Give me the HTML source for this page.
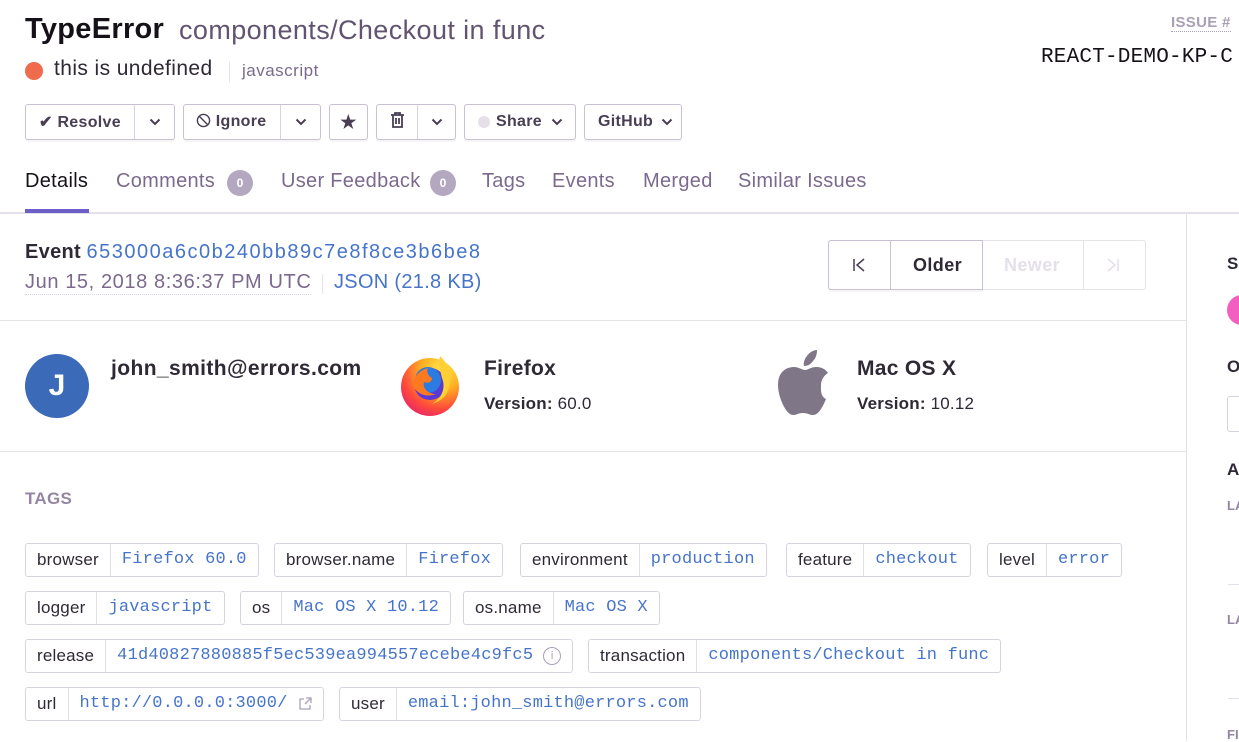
<!DOCTYPE html>
<html><head><meta charset="utf-8"><style>
*{box-sizing:border-box;margin:0;padding:0}
body{width:1239px;height:741px;overflow:hidden;background:#fff;font-family:"Liberation Sans",sans-serif;color:#2f2936;position:relative}
.a{position:absolute;white-space:nowrap}
.btn{position:absolute;top:104px;height:36px;border:1px solid #c9c0d1;border-radius:3px;box-shadow:0 2px 0 rgba(0,0,0,.04);display:flex;align-items:center;font-weight:bold;font-size:16px;color:#493e54;letter-spacing:0.3px}
.btn .s{border-left:1px solid #d8d2de;height:100%;display:flex;align-items:center;justify-content:center}
.tab{position:absolute;top:170px;font-size:20px;color:#7c6a8e;letter-spacing:0.3px}
.badge{position:absolute;top:170px;width:26px;height:26px;border-radius:13px;background:#b3a8c0;color:#fff;font-size:12px;font-weight:bold;text-align:center;line-height:26px}
.tag{position:absolute;height:34px;border:1px solid #d8d2de;border-radius:3px;display:flex;font-size:17px}
.tag .k{padding:0 11px;line-height:32px;color:#2f2936;border-right:1px solid #e4dfe9;letter-spacing:0.2px}
.tag .v{padding:0 11px;line-height:32px;color:#4674ca;font-family:"Liberation Mono",monospace;font-size:17px;letter-spacing:0.2px;display:flex;align-items:center}
.hr{position:absolute;left:0;width:1186px;height:1px;background:#e7e3eb}
</style></head><body>
<div class="a" style="left:25px;top:13px;font-size:29px;font-weight:bold;color:#161119;letter-spacing:0.3px">TypeError</div>
<div class="a" style="left:179px;top:15px;font-size:27px;color:#625471;letter-spacing:0.4px">components/Checkout in func</div>
<div class="a" style="left:25px;top:62px;width:18px;height:18px;border-radius:9px;background:#f06a4e"></div>
<div class="a" style="left:54px;top:57px;font-size:21px;color:#2f2936;letter-spacing:0.4px">this is undefined</div>
<div class="a" style="left:229px;top:62px;width:1px;height:20px;background:#e7e3eb"></div>
<div class="a" style="left:242px;top:61px;font-size:17px;color:#7c6a8e;letter-spacing:0.5px">javascript</div>

<div class="a" style="left:1171px;top:14px;font-size:15px;font-weight:bold;color:#aaa0b5;border-bottom:1px dotted #aaa0b5;letter-spacing:0.3px">ISSUE #</div>
<div class="a" style="left:1041px;top:46px;font-size:21px;font-family:'Liberation Mono',monospace;color:#161119;letter-spacing:0.2px">REACT-DEMO-KP-C</div>

<div class="btn" style="left:25px;width:150px"><div style="width:108px;padding-left:13px">✔ Resolve</div><div class="s" style="width:40px"><svg width="12" height="8" viewBox="0 0 12 8"><path d="M1.5 1.5l4.5 4.5 4.5-4.5" stroke="#493e54" stroke-width="2" fill="none"/></svg></div></div>
<div class="btn" style="left:183px;width:138px"><div style="width:96px;padding-left:12px"><svg width="15" height="15" viewBox="0 0 16 16" style="vertical-align:-2px"><circle cx="8" cy="8" r="6.5" stroke="#493e54" stroke-width="1.5" fill="none"/><path d="M3.5 3.5l9 9" stroke="#493e54" stroke-width="1.5"/></svg> Ignore</div><div class="s" style="width:40px"><svg width="12" height="8" viewBox="0 0 12 8"><path d="M1.5 1.5l4.5 4.5 4.5-4.5" stroke="#493e54" stroke-width="2" fill="none"/></svg></div></div>
<div class="btn" style="left:329px;width:39px;justify-content:center;font-size:18px">★</div>
<div class="btn" style="left:376px;width:80px"><div style="width:40px;text-align:center"><svg width="15" height="16" viewBox="0 0 15 16"><path d="M1 3h13M5 3V1h5v2M3 3v12h9V3M6 6v6M9 6v6" stroke="#493e54" stroke-width="1.8" fill="none"/></svg></div><div class="s" style="width:38px"><svg width="12" height="8" viewBox="0 0 12 8"><path d="M1.5 1.5l4.5 4.5 4.5-4.5" stroke="#493e54" stroke-width="2" fill="none"/></svg></div></div>
<div class="btn" style="left:464px;width:112px;padding-left:13px"><span style="width:12px;height:12px;border-radius:6px;background:#e4dfe9;display:inline-block;margin-right:6px"></span>Share<svg style="margin-left:9px" width="12" height="8" viewBox="0 0 12 8"><path d="M1.5 1.5l4.5 4.5 4.5-4.5" stroke="#493e54" stroke-width="2" fill="none"/></svg></div>
<div class="btn" style="left:584px;width:98px;padding-left:13px">GitHub<svg style="margin-left:8px" width="12" height="8" viewBox="0 0 12 8"><path d="M1.5 1.5l4.5 4.5 4.5-4.5" stroke="#493e54" stroke-width="2" fill="none"/></svg></div>

<div class="tab" style="left:25px;color:#161119">Details</div>
<div class="tab" style="left:116px">Comments</div><div class="badge" style="left:227px">0</div>
<div class="tab" style="left:281px">User Feedback</div><div class="badge" style="left:430px">0</div>
<div class="tab" style="left:482px">Tags</div>
<div class="tab" style="left:552px">Events</div>
<div class="tab" style="left:643px">Merged</div>
<div class="tab" style="left:738px">Similar Issues</div>
<div class="a" style="left:0;top:212px;width:1239px;height:2px;background:#e4dfe9"></div>
<div class="a" style="left:25px;top:209px;width:64px;height:4px;background:#6c5fc7"></div>
<div class="a" style="left:1186px;top:214px;width:1px;height:527px;background:#e4dfe9"></div>

<div class="a" style="left:25px;top:241px;font-size:20px"><b style="letter-spacing:0.3px">Event</b> <span style="color:#4674ca;letter-spacing:1.5px">653000a6c0b240bb89c7e8f8ce3b6be8</span></div>
<div class="a" style="left:25px;top:271px;font-size:20px;color:#7c6a8e;border-bottom:1px dotted #d8d2de;letter-spacing:0.6px">Jun 15, 2018 8:36:37 PM UTC</div>
<div class="a" style="left:322px;top:274px;width:1px;height:20px;background:#e7e3eb"></div>
<div class="a" style="left:334px;top:271px;font-size:20px;color:#4674ca;letter-spacing:0.3px">JSON (21.8 KB)</div>

<div class="a" style="left:828px;top:240px;width:318px;height:50px;border:1px solid #e7e3eb;border-radius:3px"></div>
<div class="a" style="left:828px;top:240px;width:155px;height:50px;border:1px solid #c9c0d1;border-radius:3px 0 0 3px;box-shadow:0 2px 0 rgba(0,0,0,.04)"></div>
<div class="a" style="left:890px;top:240px;width:1px;height:50px;background:#c9c0d1"></div>
<div class="a" style="left:1083px;top:240px;width:1px;height:50px;background:#e7e3eb"></div>
<svg class="a" style="left:852px;top:258px" width="14" height="14" viewBox="0 0 14 14"><path d="M2 1v12M12 1L5 7l7 6" stroke="#493e54" stroke-width="1.5" fill="none"/></svg>
<div class="a" style="left:913px;top:255px;font-size:18px;font-weight:bold;color:#2f2936;letter-spacing:0.4px">Older</div>
<div class="a" style="left:1004px;top:255px;font-size:18px;font-weight:bold;color:#e4dfe9;letter-spacing:0.4px">Newer</div>
<svg class="a" style="left:1106px;top:258px" width="14" height="14" viewBox="0 0 14 14"><path d="M2 1l7 6-7 6M12 1v12" stroke="#e4dfe9" stroke-width="1.5" fill="none"/></svg>

<div class="hr" style="top:320px"></div>
<div class="a" style="left:25px;top:354px;width:64px;height:64px;border-radius:32px;background:#3b6ab8;color:#fff;font-size:30px;font-weight:bold;text-align:center;line-height:64px">J</div>
<div class="a" style="left:111px;top:357px;font-size:21px;font-weight:bold;letter-spacing:0.4px">john_smith@errors.com</div>
<svg class="a" style="left:400px;top:354px" width="60" height="62" viewBox="0 0 60 62"><defs><radialGradient id="g" cx="0.7" cy="0.2" r="0.9"><stop offset="0" stop-color="#ffe84a"/><stop offset=".4" stop-color="#ffad22"/><stop offset=".75" stop-color="#ff4a3b"/><stop offset="1" stop-color="#e8256a"/></radialGradient></defs><circle cx="30" cy="33" r="29" fill="url(#g)"/><circle cx="30" cy="30" r="16" fill="#5a38d6"/><circle cx="28" cy="26" r="13" fill="#2b7be0"/><path d="M12 30c4 10 14 14 24 10-8 0-14-6-12-12 4 2 8 0 8-4-4-2-6-6-4-10-8 2-14 8-16 16z" fill="#ff7a1e"/><path d="M40 2c8 8 14 20 8 34-2 8-10 12-16 14 10-6 14-16 10-26-2-8-4-14-2-22z" fill="#ffcf33"/></svg>
<div class="a" style="left:484px;top:357px;font-size:21px;font-weight:bold;letter-spacing:0.3px">Firefox</div>
<div class="a" style="left:484px;top:394px;font-size:17px;letter-spacing:0.2px"><b>Version:</b> 60.0</div>
<svg class="a" style="left:777px;top:350px" width="54" height="66" viewBox="0 0 54 66"><path d="M44 35c0-8 7-12 7-12-4-6-10-6-12-6-5 0-8 3-11 3s-6-3-11-3C9 17 1 22 1 35c0 12 8 30 15 30 4 0 5-2 10-2s6 2 10 2c6 0 10-9 13-16-6-3-5-10-5-14zM36 11c3-3 4-7 4-11-4 0-8 3-10 6-2 2-4 7-3 10 4 0 7-2 9-5z" fill="#7f7688"/></svg>
<div class="a" style="left:857px;top:357px;font-size:21px;font-weight:bold;letter-spacing:0.3px">Mac OS X</div>
<div class="a" style="left:857px;top:394px;font-size:17px;letter-spacing:0.2px"><b>Version:</b> 10.12</div>
<div class="hr" style="top:451px"></div>

<div class="a" style="left:25px;top:489px;font-size:17px;font-weight:bold;color:#9585a3;letter-spacing:0.3px">TAGS</div>

<div class="tag" style="left:25px;top:543px"><span class="k">browser</span><span class="v">Firefox 60.0</span></div>
<div class="tag" style="left:274px;top:543px"><span class="k">browser.name</span><span class="v">Firefox</span></div>
<div class="tag" style="left:520px;top:543px"><span class="k">environment</span><span class="v">production</span></div>
<div class="tag" style="left:786px;top:543px"><span class="k">feature</span><span class="v">checkout</span></div>
<div class="tag" style="left:987px;top:543px"><span class="k">level</span><span class="v">error</span></div>
<div class="tag" style="left:25px;top:591px"><span class="k">logger</span><span class="v">javascript</span></div>
<div class="tag" style="left:240px;top:591px"><span class="k">os</span><span class="v">Mac OS X 10.12</span></div>
<div class="tag" style="left:463px;top:591px"><span class="k">os.name</span><span class="v">Mac OS X</span></div>
<div class="tag" style="left:25px;top:639px"><span class="k">release</span><span class="v">41d40827880885f5ec539ea994557ecebe4c9fc5<span style="display:inline-block;width:18px;height:18px;border:1px solid #aaa0b5;border-radius:9px;margin-left:10px;font-family:'Liberation Sans';font-size:11px;color:#aaa0b5;text-align:center;line-height:16px">i</span></span></div>
<div class="tag" style="left:588px;top:639px"><span class="k">transaction</span><span class="v">components/Checkout in func</span></div>
<div class="tag" style="left:25px;top:687px"><span class="k">url</span><span class="v">http://0.0.0.0:3000/<svg style="margin-left:10px" width="14" height="14" viewBox="0 0 14 14"><path d="M6 2H2v10h10V8M8 1h5v5M13 1L7 7" stroke="#aaa0b5" stroke-width="1.3" fill="none"/></svg></span></div>
<div class="tag" style="left:339px;top:687px"><span class="k">user</span><span class="v">email:john_smith@errors.com</span></div>

<div class="a" style="left:1227px;top:254px;font-size:17px;font-weight:bold">S</div>
<div class="a" style="left:1227px;top:295px;width:30px;height:30px;border-radius:15px;background:#f25fc1"></div>
<div class="a" style="left:1227px;top:357px;font-size:17px;font-weight:bold">O</div>
<div class="a" style="left:1227px;top:396px;width:30px;height:36px;border:1px solid #d8d2de;border-radius:3px"></div>
<div class="a" style="left:1227px;top:460px;font-size:17px;font-weight:bold">A</div>
<div class="a" style="left:1227px;top:498px;font-size:13px;font-weight:bold;color:#9585a3">LA</div>
<div class="a" style="left:1228px;top:584px;width:20px;height:1px;background:#e4dfe9"></div>
<div class="a" style="left:1227px;top:612px;font-size:13px;font-weight:bold;color:#9585a3">LA</div>
<div class="a" style="left:1228px;top:698px;width:20px;height:1px;background:#e4dfe9"></div>
<div class="a" style="left:1227px;top:727px;font-size:13px;font-weight:bold;color:#9585a3">FI</div>
</body></html>
